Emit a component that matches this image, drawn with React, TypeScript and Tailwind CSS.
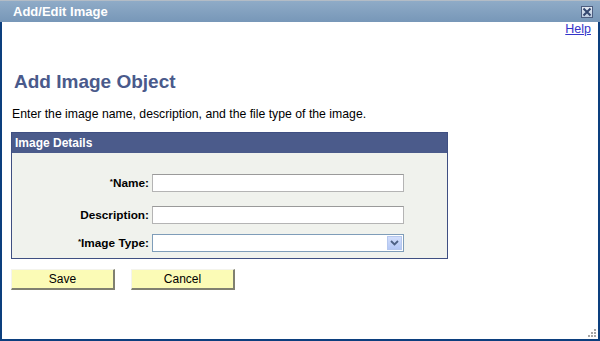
import React from 'react';

// Add/Edit Image dialog
export default function App() {
  const fields = [
    { label: 'Name:', required: true, kind: 'text', mt: 'mt-[21px]' },
    { label: 'Description:', required: false, kind: 'text', mt: 'mt-[14px]' },
    { label: 'Image Type:', required: true, kind: 'select', mt: 'mt-[10px]' },
  ];

  return (
    <div className="w-[600px] h-[341px] flex flex-col bg-white text-black font-['Liberation_Sans',Arial,sans-serif]">
      {/* Title bar */}
      <div className="h-[22px] flex items-center justify-between border-t border-[#b3bcc6] bg-gradient-to-b from-[#8fabc7] to-[#7797b8] pl-[13px] pr-[7px]">
        <span className="text-[13px] font-bold text-white leading-none">Add/Edit Image</span>
        <button className="w-[12px] h-[12px] border border-[#4d5d7f] bg-gradient-to-b from-[#e4ebf4] to-[#bccbdf] flex items-center justify-center">
          <svg width="10" height="10" viewBox="0 0 10 10">
            <path d="M1.5 1.5 L8.5 8.5 M8.5 1.5 L1.5 8.5" stroke="#33466e" strokeWidth="2" fill="none" />
          </svg>
        </button>
      </div>

      {/* Body */}
      <div className="relative flex-1 flex flex-col items-start border-l-2 border-r-2 border-b-2 border-[#0c3f7e]">
        <div className="self-stretch flex justify-end pr-[7px]">
          <a href="#" className="text-[12.5px] leading-[14px] text-[#3434c8] underline">Help</a>
        </div>

        <h1 className="mt-[35px] ml-[12px] text-[19px] leading-[22px] font-bold text-[#4a5a8b]">Add Image Object</h1>

        <p className="mt-[14px] ml-[10px] text-[12.25px] leading-[14px]">
          Enter the image name, description, and the file type of the image.
        </p>

        {/* Image Details */}
        <section className="mt-[11px] ml-[9px] w-[437px] h-[127px] border border-[#3f4f82] flex flex-col">
          <div className="h-[20px] bg-[#4b5b8b] flex items-center pl-[3px]">
            <span className="text-[12px] font-bold text-white">Image Details</span>
          </div>
          <div className="flex-1 bg-[#f0f2ed] flex flex-col">
            {fields.map((f) => (
              <div key={f.label} className={`${f.mt} flex items-center`}>
                <label className="w-[137px] text-right text-[11.8px] font-bold leading-[18px]">
                  {f.required && <span className="relative top-[-3px] text-[8px] leading-none">*</span>}
                  {f.label}
                </label>
                {f.kind === 'text' ? (
                  <div className="ml-[3px] w-[252px] h-[18px] bg-white border border-[#b4b4b4] border-t-[#9a9a9a]" />
                ) : (
                  <div className="ml-[3px] w-[252px] h-[18px] bg-white border border-[#7f9db9] flex items-center justify-end pr-px">
                    <div className="w-[15px] h-[14px] bg-gradient-to-b from-[#d2defb] to-[#b4c8f6] border border-[#b6c8ee] flex items-center justify-center">
                      <svg width="9" height="6" viewBox="0 0 9 6">
                        <path d="M1 1 L4.5 4.5 L8 1" stroke="#4d6185" strokeWidth="1.8" fill="none" />
                      </svg>
                    </div>
                  </div>
                )}
              </div>
            ))}
          </div>
        </section>

        {/* Buttons */}
        <div className="mt-[10px] ml-[9px] flex gap-[16px]">
          {['Save', 'Cancel'].map((b) => (
            <button
              key={b}
              className="w-[104px] h-[21px] bg-[#fbfbb6] border-t border-l border-t-[#f4f4ec] border-l-[#f4f4ec] border-b-2 border-r-2 border-b-[#808070] border-r-[#808070] text-[12px] leading-none text-black"
            >
              {b}
            </button>
          ))}
        </div>

        {/* resize grip */}
        <svg className="absolute right-[1px] bottom-[1px]" width="10" height="10" viewBox="0 0 10 10">
          <rect x="7" y="1" width="2" height="2" fill="#a6a6a6" />
          <rect x="4" y="4" width="2" height="2" fill="#a6a6a6" />
          <rect x="7" y="4" width="2" height="2" fill="#a6a6a6" />
          <rect x="1" y="7" width="2" height="2" fill="#a6a6a6" />
          <rect x="4" y="7" width="2" height="2" fill="#a6a6a6" />
          <rect x="7" y="7" width="2" height="2" fill="#a6a6a6" />
        </svg>
      </div>
    </div>
  );
}
